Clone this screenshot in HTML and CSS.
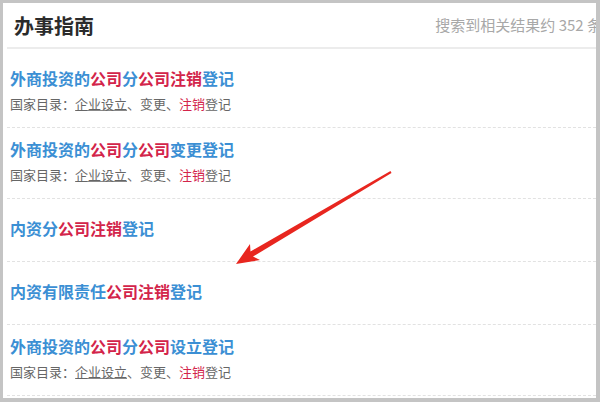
FILE: index.html
```html
<!DOCTYPE html>
<html>
<head>
  <meta charset="utf-8">
  <title>办事指南</title>
  <link rel="stylesheet" href="styles.css">
</head>
<body>
  <div class="frame">
    <div class="head">
      <h2>办事指南</h2>
      <span class="count">搜索到相关结果约 352 条</span>
    </div>

    <ul class="list">
      <li class="item">
        <a class="title" href="#">外商投资的<em>公司</em>分<em>公司注销</em>登记</a>
        <p class="sub">国家目录：<u>企业设立</u>、变更、<em>注销</em>登记</p>
      </li>
      <li class="item">
        <a class="title" href="#">外商投资的<em>公司</em>分<em>公司</em>变更登记</a>
        <p class="sub">国家目录：<u>企业设立</u>、变更、<em>注销</em>登记</p>
      </li>
      <li class="item single">
        <a class="title" href="#">内资分<em>公司注销</em>登记</a>
      </li>
      <li class="item single">
        <a class="title" href="#">内资有限责任<em>公司注销</em>登记</a>
      </li>
      <li class="item">
        <a class="title" href="#">外商投资的<em>公司</em>分<em>公司</em>设立登记</a>
        <p class="sub">国家目录：<u>企业设立</u>、变更、<em>注销</em>登记</p>
      </li>
    </ul>
  </div>

  <!-- annotation arrow drawn over the list -->
  <svg class="arrow" width="600" height="402" viewBox="0 0 600 402">
    <polygon fill="#e8261f"
      points="236,264 250,244 250.5,251.5 390.5,171 391.5,173 253,256.5 260,260"/>
  </svg>
</body>
</html>
```

FILE: styles.css
```css
body {
  margin: 0;
  background: #c4c4c4;
  font-family: "Noto Sans CJK SC", "Noto Sans", sans-serif;
  position: relative;
  width: 600px;
  height: 402px;
  overflow: hidden;
}
.frame {
  margin: 3px 4px 0 3px;
  height: 395px;
  background: #fff;
  overflow: hidden;
}
.head {
  display: flex;
  align-items: center;
  height: 44px;
  margin-left: 4px;
  padding-left: 7px;
  border-bottom: 2px solid #ececec;
}
.head h2 {
  margin: 2px 0 0;
  font-size: 20px;
  font-weight: bold;
  color: #2b2b2b;
  line-height: 28px;
}
.count {
  margin-left: auto;
  margin-right: -6px;
  white-space: nowrap;
  font-size: 15px;
  color: #a8a8a8;
  line-height: 20px;
}
.list {
  list-style: none;
  margin: 0 0 0 4px;
  padding: 8px 0 0;
}
.item {
  padding: 9px 0 13px 3px;
  border-bottom: 1px dashed #e2e2e2;
}
.item.single {
  padding: 17px 0 21px 3px;
}
.title {
  display: block;
  font-size: 16px;
  font-weight: bold;
  line-height: 24px;
  color: #3b8fd4;
  text-decoration: none;
}
.title em {
  font-style: normal;
  color: #d3244a;
}
.sub {
  margin: 4px 0 0;
  font-size: 13px;
  line-height: 20px;
  color: #666;
}
.sub em {
  font-style: normal;
  color: #d3244a;
}
.sub u {
  text-decoration-color: #888;
}
.arrow {
  position: absolute;
  left: 0;
  top: 0;
}
```
